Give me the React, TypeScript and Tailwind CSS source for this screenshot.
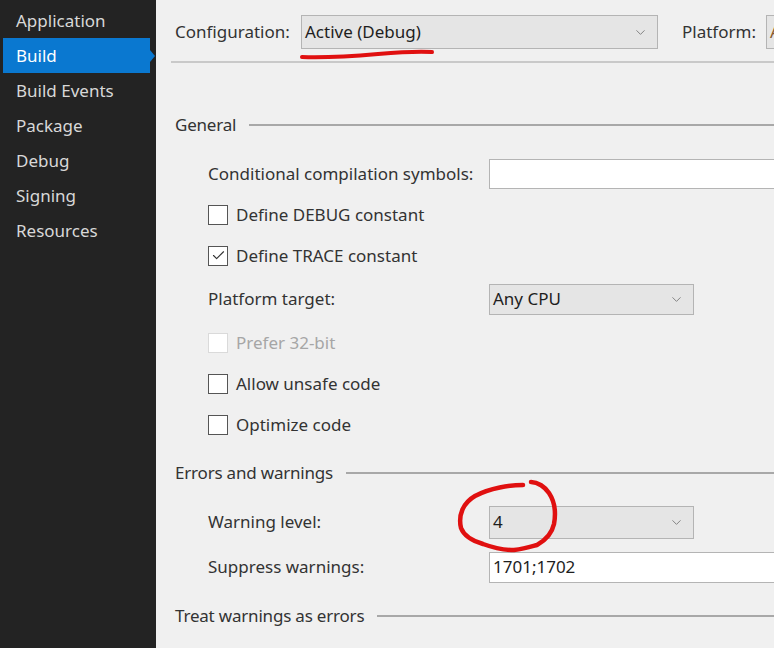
import { ChevronDown, Check } from 'lucide-react';

const nav = ['Application', 'Build', 'Build Events', 'Package', 'Debug', 'Signing', 'Resources'];

const font = { fontFamily: '"Noto Sans", "Open Sans", sans-serif' };

function Dropdown({ value, width }: { value: string; width: string }) {
  return (
    <div className={`${width} h-full flex items-center justify-between bg-[#e5e5e5] border border-[#b4b4b4] pl-[3px] pr-[9px] text-[#1e1e1e]`}>
      <span>{value}</span>
      <ChevronDown size={15} strokeWidth={1.3} className="text-[#6d6d6d]" />
    </div>
  );
}

function Section({ title }: { title: string }) {
  return (
    <div className="flex items-center h-[40px] pl-[4px] gap-[13px]">
      <span className="whitespace-nowrap text-[#333] tracking-[-0.2px]">{title}</span>
      <div className="flex-1 h-[2px] bg-[#a8a8a8]" />
    </div>
  );
}

function CheckRow({ label, checked, disabled }: { label: string; checked?: boolean; disabled?: boolean }) {
  return (
    <div className="flex items-center h-[41px] pl-[37px] gap-[8px]">
      <div
        className={`w-[20px] h-[20px] flex items-center justify-center bg-white border ${
          disabled ? 'border-[#dadada]' : 'border-[#555] border-[1.5px]'
        }`}
      >
        {checked && <Check size={15} strokeWidth={1.8} className="text-[#333]" />}
      </div>
      <span className={disabled ? 'text-[#a6a6a6]' : 'text-[#333]'}>{label}</span>
    </div>
  );
}

export default function App() {
  return (
    <div className="relative flex w-[774px] h-[648px] overflow-hidden text-[17px]" style={font}>
      <aside className="w-[156px] shrink-0 bg-[#232323] pt-[3px]">
        {nav.map((n) => (
          <div
            key={n}
            className={`relative h-[35px] flex items-center pl-[13px] ml-[3px] mr-[6px] ${
              n === 'Build' ? 'bg-[#0a78d0] text-white' : 'text-[#d8d8d8]'
            }`}
          >
            {n}
            {n === 'Build' && (
              <div className="absolute right-[-5px] top-[12px] w-0 h-0 border-y-[6px] border-y-transparent border-l-[5px] border-l-[#0a78d0]" />
            )}
          </div>
        ))}
      </aside>

      <main className="flex-1 bg-[#f0f0f0] pl-[15px]">
        <div className="h-[63px] border-b-2 border-[#c9c9c9] flex items-center pl-[4px] pt-[3px]">
          <span className="text-[#333] w-[126px]">Configuration:</span>
          <div className="h-[34px]">
            <Dropdown value="Active (Debug)" width="w-[357px]" />
          </div>
          <span className="text-[#333] ml-[24px] w-[84px]">Platform:</span>
          <div className="h-[34px] w-[40px] bg-[#e5e5e5] border border-[#b4b4b4] pl-[3px] overflow-hidden whitespace-nowrap flex items-center text-[#8a5a2a]">
            Active (Any CPU)
          </div>
        </div>

        <div className="mt-[42px]">
          <Section title="General" />
        </div>

        <div className="mt-[9px] h-[40px] flex items-center pl-[37px]">
          <span className="w-[281px] text-[#333]">Conditional compilation symbols:</span>
          <div className="flex-1 h-[30px] bg-white border border-[#b4b4b4] mr-[-4px]" />
        </div>

        <CheckRow label="Define DEBUG constant" />
        <CheckRow label="Define TRACE constant" checked />

        <div className="h-[46px] flex items-center pl-[37px]">
          <span className="w-[281px] text-[#333]">Platform target:</span>
          <div className="h-[31px]">
            <Dropdown value="Any CPU" width="w-[205px]" />
          </div>
        </div>

        <CheckRow label="Prefer 32-bit" disabled />
        <CheckRow label="Allow unsafe code" />
        <CheckRow label="Optimize code" />

        <div className="mt-[8px]">
          <Section title="Errors and warnings" />
        </div>

        <div className="mt-[9px] h-[40px] flex items-center pl-[37px]">
          <span className="w-[281px] text-[#333]">Warning level:</span>
          <div className="h-[33px]">
            <Dropdown value="4" width="w-[205px]" />
          </div>
        </div>

        <div className="mt-[5px] h-[40px] flex items-center pl-[37px]">
          <span className="w-[281px] text-[#333]">Suppress warnings:</span>
          <div className="flex-1 h-[31px] bg-white border border-[#b4b4b4] mr-[-4px] flex items-center pl-[3px] text-[#1e1e1e]">
            1701;1702
          </div>
        </div>

        <div className="mt-[9px]">
          <Section title="Treat warnings as errors" />
        </div>
      </main>

      <svg className="absolute inset-0 pointer-events-none" width="774" height="648" viewBox="0 0 774 648">
        <path
          d="M302 57 C 330 58, 355 56, 378 54 S 418 51, 432 52"
          fill="none"
          stroke="#e01010"
          strokeWidth="4"
          strokeLinecap="round"
        />
        <path
          d="M523 485 C 510 485, 490 488, 475 496 C 463 503, 458 515, 461 528 C 464 536, 473 541, 483 544 C 494 548, 504 550, 514 550 C 524 549, 530 547, 537 545 C 546 540, 552 533, 554 524 C 556 513, 555 502, 549 493 C 545 487, 538 482, 531 482"
          fill="none"
          stroke="#e01010"
          strokeWidth="4.5"
          strokeLinecap="round"
        />
      </svg>
    </div>
  );
}
